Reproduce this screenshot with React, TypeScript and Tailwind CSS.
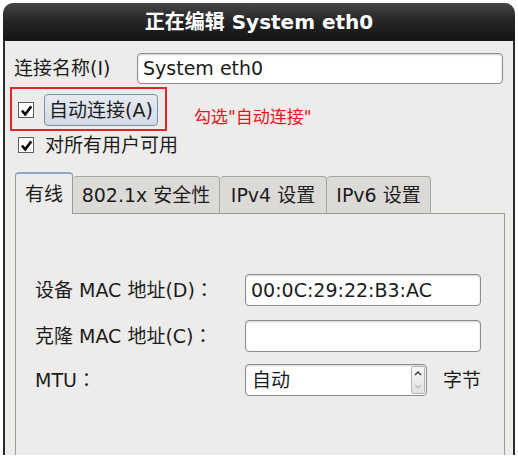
import type { ReactNode } from 'react';

function Check() {
  return (
    <span className="flex h-[16px] w-[16px] shrink-0 items-center justify-center border border-[#5c5c5c] bg-white">
      <svg viewBox="0 0 12 12" className="h-[13px] w-[13px]">
        <path d="M1.8 6.2 L4.8 9.6 L10.4 2.2" fill="none" stroke="#111" strokeWidth="2.4" />
      </svg>
    </span>
  );
}

function Entry({ children, className = '' }: { children?: ReactNode; className?: string }) {
  return (
    <div
      className={`flex items-center rounded-[4px] border border-[#8c8c8c] bg-white pl-[5px] shadow-[inset_0_1px_2px_rgba(0,0,0,0.18)] ${className}`}
    >
      {children}
    </div>
  );
}

// fullwidth colon, centred the way the GTK font draws it
function Colon() {
  return <span className="font-['Noto_Sans_CJK_JP',sans-serif]">：</span>;
}

const TABS = [
  { label: '802.1x 安全性', w: 'w-[147px]' },
  { label: 'IPv4 设置', w: 'w-[107px]' },
  { label: 'IPv6 设置', w: 'w-[104px]' },
];

export default function App() {
  return (
    <div className="h-[459px] w-[518px] overflow-hidden bg-white pl-[3px] pt-[3px] font-['DejaVu_Sans','Noto_Sans_CJK_SC',sans-serif] text-[19px] text-[#1c1c1c]">
      <div className="flex h-[452px] w-[512px] flex-col">
        {/* title bar */}
        <div className="flex h-[38px] shrink-0 items-center justify-center rounded-t-[10px] bg-linear-to-b from-[#464646] via-[#242424] to-[#151515] text-[20px] font-bold text-white">
          正在编辑 System eth0
        </div>

        <div className="flex flex-1 flex-col border-x-2 border-[#2c2c2c] bg-[#edeceb]">
          {/* name */}
          <div className="ml-[9px] mt-[12px] flex h-[31px] items-center">
            <span className="w-[123px]">连接名称(I)</span>
            <Entry className="h-[31px] w-[366px]">System eth0</Entry>
          </div>

          {/* auto connect, highlighted */}
          <div className="mt-[3px] flex items-start">
            <div className="ml-[5px] flex h-[44px] w-[157px] items-center border-2 border-[#e3242a] pl-[6px] pt-[2px]">
              <Check />
              <div className="ml-[10px] flex h-[32px] w-[114px] items-center justify-center rounded-[4px] border border-[#7f8ea6] bg-linear-to-b from-[#e6ebf2] to-[#d3dae6]">
                自动连接(A)
              </div>
            </div>
            <span className="ml-[27px] mt-[20px] text-[17px] leading-[20px] text-[#e8141c]">
              勾选"自动连接"
            </span>
          </div>

          <div className="ml-[13px] mt-[4px] flex h-[20px] items-center">
            <Check />
            <span className="ml-[11px]">对所有用户可用</span>
          </div>

          {/* tabs */}
          <div className="ml-[10px] mt-[17px] flex h-[41px] items-end">
            <div className="relative z-10 -mb-px flex h-[42px] w-[58px] items-center justify-center rounded-t-[4px] border-x border-t-2 border-x-[#9c9a96] border-t-[#8ca5cb] bg-[#edeceb]">
              有线
            </div>
            {TABS.map(t => (
              <div
                key={t.label}
                className={`flex h-[37px] items-center justify-center rounded-t-[4px] border-r border-t border-[#a8a6a1] bg-[#dcdad6] ${t.w}`}
              >
                {t.label}
              </div>
            ))}
          </div>

          {/* panel */}
          <div className="ml-[10px] w-[490px] flex-1 border-x border-t border-[#9c9a96] pl-[19px] pt-[60px]">
            <div className="flex h-[32px] items-center">
              <span className="w-[210px]">设备 MAC 地址(D)<Colon /></span>
              <Entry className="h-[32px] w-[236px]">00:0C:29:22:B3:AC</Entry>
            </div>
            <div className="mt-[14px] flex h-[32px] items-center">
              <span className="w-[210px]">克隆 MAC 地址(C)<Colon /></span>
              <Entry className="h-[32px] w-[236px]" />
            </div>
            <div className="mt-[12px] flex h-[32px] items-center">
              <span className="w-[210px]">MTU<Colon /></span>
              <div className="flex h-[32px] w-[182px] items-stretch rounded-[4px] border border-[#8c8c8c] bg-white shadow-[inset_0_1px_2px_rgba(0,0,0,0.18)]">
                <div className="flex flex-1 items-center pl-[6px]">自动</div>
                <div className="my-[1px] mr-[1px] flex w-[14px] flex-col rounded-[2px] border border-[#b4b4b4] bg-linear-to-b from-[#f8f8f8] to-[#e2e2e2]">
                  <div className="flex flex-1 items-center justify-center">
                    <svg viewBox="0 0 8 5" className="h-[5px] w-[8px]">
                      <path d="M1 4 L4 1 L7 4" fill="none" stroke="#333" strokeWidth="1.4" />
                    </svg>
                  </div>
                  <div className="flex flex-1 items-center justify-center">
                    <svg viewBox="0 0 8 5" className="h-[5px] w-[8px]">
                      <path d="M1 1 L4 4 L7 1" fill="none" stroke="#b8b8b8" strokeWidth="1.2" />
                    </svg>
                  </div>
                </div>
              </div>
              <span className="ml-[16px]">字节</span>
            </div>
          </div>
        </div>
      </div>
    </div>
  );
}
